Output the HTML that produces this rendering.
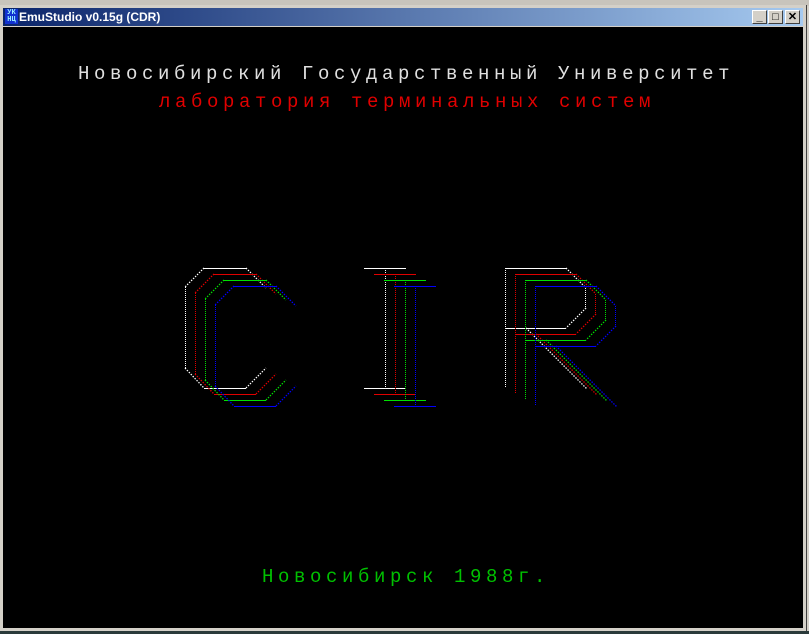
<!DOCTYPE html>
<html><head><meta charset="utf-8"><style>
*{margin:0;padding:0;box-sizing:border-box}
body{width:809px;height:634px;background:#d4d0c8;position:relative;overflow:hidden;font-family:"Liberation Sans",sans-serif}
#top{position:absolute;left:0;top:0;width:809px;height:6px;background:#c8c4bc}
#win{position:absolute;left:0;top:5px;width:807px;height:627px;background:#d4d0c8;border-right:1px solid #404040;border-bottom:1px solid #404040}
#title{position:absolute;left:3px;top:3px;width:800px;height:18px;background:linear-gradient(90deg,#0a246a,#a6caf0)}
#title .t{position:absolute;left:16px;top:2px;color:#fff;font-weight:bold;font-size:12px}
#ico{position:absolute;left:2px;top:1px;width:13px;height:15px;background:#1030d0;color:#9ef;font:bold 7px/7px "Liberation Mono",monospace;text-align:center;padding-top:1px}
.b{position:absolute;top:2px;width:15px;height:14px;background:#d4d0c8;border:1px solid;border-color:#fff #404040 #404040 #fff;font:bold 11px/12px "Liberation Sans",sans-serif;text-align:center;color:#000}
#scr{position:absolute;left:3px;top:22px;width:800px;height:601px;background:#000}
.txt{position:absolute;font-family:"Liberation Mono",monospace;font-size:19px;letter-spacing:4.6px;white-space:pre}
#bot{position:absolute;left:0;top:631px;width:809px;height:3px;background:#2a3a3a}
</style></head><body>
<div id="top"></div>
<div id="win">
 <div id="title"><div id="ico">УК<br>НЦ</div><div class="t">EmuStudio v0.15g (CDR)</div>
  <div class="b" style="left:749px">_</div><div class="b" style="left:765px">□</div><div class="b" style="left:782px">✕</div>
 </div>
 <div id="scr"></div>
</div>
<div class="txt" style="left:78px;top:63px;color:#e0e0e0">Новосибирский Государственный Университет</div>
<div class="txt" style="left:159px;top:91px;color:#e00000">лаборатория терминальных систем</div>
<div class="txt" style="left:262px;top:566px;color:#00c000">Новосибирск 1988г.</div>
<svg style="position:absolute;left:0;top:0" width="809" height="634">
<defs>
<g id="L" fill="none">
 <path shape-rendering="crispEdges" d="M204 268.5H246M204 388.5H246M364 268.5H406M364 388.5H406M505 268.5H566M505 328.5H566"/>
 <path shape-rendering="crispEdges" stroke-dasharray="1 1" d="M185.5 287V368M385.5 268V388M505.5 268V388M585.5 288V308"/>
 <path stroke-width="1.3" stroke-dasharray="1.4 1.4" d="M204 268L185 287M246 268L266 288M185 368L204 388M246 388L266 368M566 268L586 288M586 308L566 328M526 328L587 389"/>
</g>
</defs>
<use href="#L" stroke="#ffffff"/>
<use href="#L" stroke="#e00000" transform="translate(10,6)"/>
<use href="#L" stroke="#00e000" transform="translate(20,12)"/>
<use href="#L" stroke="#0000ff" transform="translate(30,18)"/>
</svg>
<div id="bot"></div>
</body></html>
